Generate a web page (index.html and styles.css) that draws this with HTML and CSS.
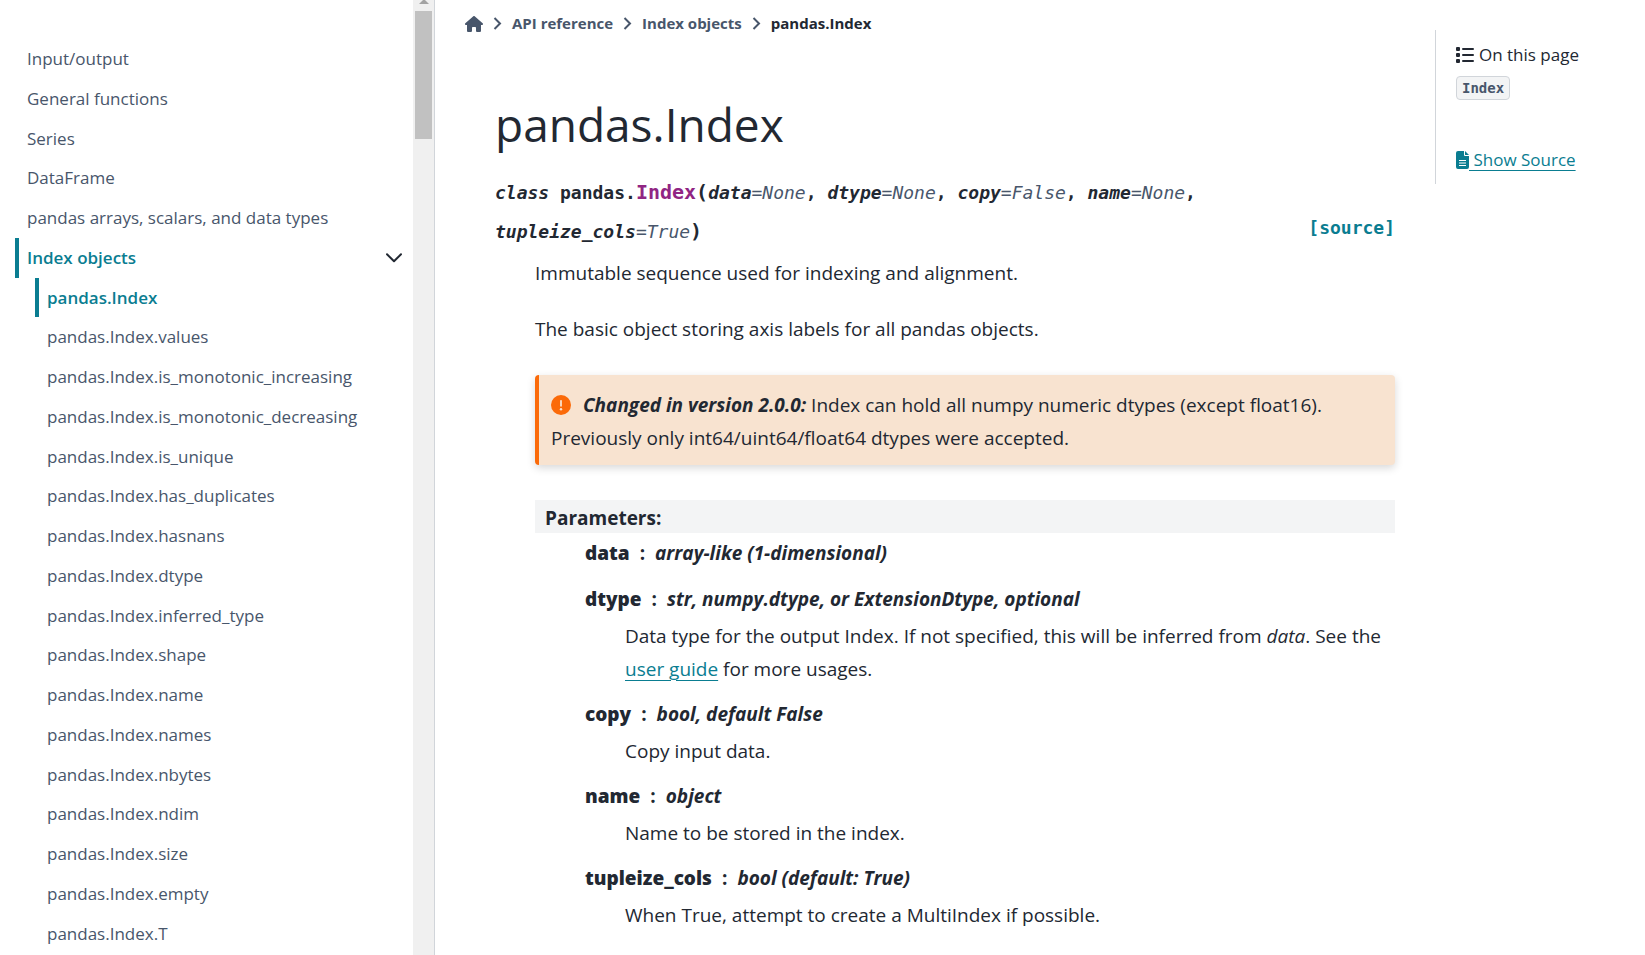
FILE: index.html
```html
<!DOCTYPE html>
<html lang="en">
<head>
<meta charset="utf-8">
<title>pandas.Index</title>
<link rel="stylesheet" href="styles.css">
</head>
<body>
<div class="page">
  <div class="sidebar">
    <nav class="sidebar-nav" aria-label="Section navigation">
      <ul class="nav-list">
        <li><a href="#">Input/output</a></li>
        <li><a href="#">General functions</a></li>
        <li><a href="#">Series</a></li>
        <li><a href="#">DataFrame</a></li>
        <li><a href="#">pandas arrays, scalars, and data types</a></li>
        <li>
          <div class="nav-row">
            <a class="current" href="#">Index objects</a>
            <button class="toggle" type="button" aria-label="Collapse Index objects">
              <svg width="16" height="10" viewBox="0 0 16 10" fill="none" stroke="currentColor" stroke-width="2" stroke-linecap="round" stroke-linejoin="round"><path d="M1 1.3l7 7 7-7"/></svg>
            </button>
          </div>
          <ul class="nav-list nested">
            <li><a class="current" href="#">pandas.Index</a></li>
            <li><a href="#">pandas.Index.values</a></li>
            <li><a href="#">pandas.Index.is_monotonic_increasing</a></li>
            <li><a href="#">pandas.Index.is_monotonic_decreasing</a></li>
            <li><a href="#">pandas.Index.is_unique</a></li>
            <li><a href="#">pandas.Index.has_duplicates</a></li>
            <li><a href="#">pandas.Index.hasnans</a></li>
            <li><a href="#">pandas.Index.dtype</a></li>
            <li><a href="#">pandas.Index.inferred_type</a></li>
            <li><a href="#">pandas.Index.shape</a></li>
            <li><a href="#">pandas.Index.name</a></li>
            <li><a href="#">pandas.Index.names</a></li>
            <li><a href="#">pandas.Index.nbytes</a></li>
            <li><a href="#">pandas.Index.ndim</a></li>
            <li><a href="#">pandas.Index.size</a></li>
            <li><a href="#">pandas.Index.empty</a></li>
            <li><a href="#">pandas.Index.T</a></li>
          </ul>
        </li>
      </ul>
    </nav>
    <div class="scrollbar" aria-hidden="true">
      <svg class="scroll-arrow" width="10" height="4" viewBox="0 0 10 4"><path d="M4 0h2l4 4H0z" fill="#a3a3a3"/></svg>
      <div class="scroll-thumb"></div>
    </div>
  </div>

  <main class="main">
    <nav class="breadcrumbs" aria-label="Breadcrumb">
      <a href="#" aria-label="Home"><svg class="home" width="18" height="16" viewBox="0 0 576 512" fill="currentColor"><path d="M575.8 255.500c0 18-15 32.100-32 32.100h-32l.7 160.200c0 2.700-.2 5.400-.5 8.100V472c0 22.100-17.900 40-40 40H392c-22.100 0-40-17.900-40-40v-88c0-17.700-14.300-32-32-32h-64c-17.700 0-32 14.300-32 32v88c0 22.100-17.900 40-40 40h-80c-22.100 0-40-17.900-40-40V287.600H32c-18 0-32-14-32-32.100 0-9 3-17 10-24L266.400 8c7-7 15-8 22-8s15 2 21 7l255.400 224.500c8 7 12 15 11 24z"/></svg></a>
      <svg class="sep" width="9" height="13" viewBox="0 0 9 13"><path d="M1.500 1l5.500 5.500L1.500 12"/></svg>
      <a href="#">API reference</a>
      <svg class="sep" width="9" height="13" viewBox="0 0 9 13"><path d="M1.500 1l5.500 5.500L1.500 12"/></svg>
      <a href="#">Index objects</a>
      <svg class="sep" width="9" height="13" viewBox="0 0 9 13"><path d="M1.500 1l5.500 5.500L1.500 12"/></svg>
      <span class="here">pandas.Index</span>
    </nav>

    <article class="article">
      <h1>pandas.Index</h1>
      <div class="signature">
        <code class="sig-text"><em>class</em> pandas.<span class="sig-name">Index</span><span class="paren">(</span><em>data</em><i>=None</i>, <em>dtype</em><i>=None</i>, <em>copy</em><i>=False</i>, <em>name</em><i>=None</i>, <em>tupleize_cols</em><i>=True</i><span class="paren">)</span></code>
        <a class="source" href="#">[source]</a>
      </div>
      <div class="description">
        <p>Immutable sequence used for indexing and alignment.</p>
        <p>The basic object storing axis labels for all pandas objects.</p>
        <div class="version-note">
          <svg class="note-icon" width="20" height="20" viewBox="0 0 20 20"><circle cx="10" cy="10" r="10" fill="#fb6a09"/><path d="M10 5.800v5" stroke="#f8e3d0" stroke-width="1.800" stroke-linecap="round"/><circle cx="10" cy="14.200" r="1.200" fill="#f8e3d0"/></svg><em>Changed in version 2.0.0:</em> Index can hold all numpy numeric dtypes (except float16). Previously only int64/uint64/float64 dtypes were accepted.
        </div>
        <h2 class="field-title">Parameters:</h2>
        <dl class="params">
          <dt><strong>data</strong><span class="colon">:</span><em>array-like (1-dimensional)</em></dt>
          <dt><strong>dtype</strong><span class="colon">:</span><em>str, numpy.dtype, or ExtensionDtype, optional</em></dt>
          <dd>Data type for the output Index. If not specified, this will be inferred from <i>data</i>. See the <a href="#">user guide</a> for more usages.</dd>
          <dt><strong>copy</strong><span class="colon">:</span><em>bool, default False</em></dt>
          <dd>Copy input data.</dd>
          <dt><strong>name</strong><span class="colon">:</span><em>object</em></dt>
          <dd>Name to be stored in the index.</dd>
          <dt><strong>tupleize_cols</strong><span class="colon">:</span><em>bool (default: True)</em></dt>
          <dd>When True, attempt to create a MultiIndex if possible.</dd>
        </dl>
      </div>
    </article>
  </main>

  <aside class="toc">
    <div class="toc-inner">
      <div class="toc-title">
        <svg width="18" height="16" viewBox="0 0 18 16" fill="currentColor"><rect x="0" y="0" width="4" height="4" rx="1"/><rect x="0" y="6" width="4" height="4" rx="1"/><rect x="0" y="12" width="4" height="4" rx="1"/><rect x="6" y="1" width="12" height="2" rx="1"/><rect x="6" y="7" width="12" height="2" rx="1"/><rect x="6" y="13" width="12" height="2" rx="1"/></svg>
        On this page
      </div>
      <a class="toc-link" href="#"><code>Index</code></a>
      <a class="show-source" href="#"><svg width="13" height="18" viewBox="0 0 13 18"><path d="M2 0h6v4a1 1 0 0 0 1 1h4v11a2 2 0 0 1-2 2H2a2 2 0 0 1-2-2V2a2 2 0 0 1 2-2z" fill="currentColor"/><path d="M9 0l4 4H9z" fill="currentColor"/><path d="M3 9.500h7M3 12h7M3 14.500h7" stroke="#fff"/></svg><span>&nbsp;Show Source</span></a>
    </div>
  </aside>
</div>
</body>
</html>
```
FILE: styles.css
```css
* {
  box-sizing: border-box;
}

body {
  margin: 0;
  background: #fff;
  color: #222832;
  font-family: "Open Sans", "Noto Sans", sans-serif;
  font-size: 19px;
  line-height: 33px;
}

a {
  color: #0a7d91;
}

.page {
  display: flex;
  height: 100vh;
  overflow: hidden;
}

/* Sidebar */
.sidebar {
  display: flex;
  flex: 0 0 435px;
  border-right: 1px solid #d1d5da;
  overflow: hidden;
}

.sidebar-nav {
  flex: 1;
  padding: 39px 0 0 15px;
  font-size: 17px;
  line-height: 1.75;
}

.nav-list {
  margin: 0;
  padding: 0;
  list-style: none;
}

.nested {
  padding-left: 20px;
}

.nav-list a {
  display: block;
  padding: 5px 0 5px 12px;
  color: #48566b;
  text-decoration: none;
}

.nav-list a.current {
  padding-left: 8px;
  border-left: 4px solid #0a7d91;
  color: #0a7d91;
  font-weight: 600;
}

.nav-row {
  display: flex;
  justify-content: space-between;
}

.toggle {
  display: flex;
  align-items: center;
  justify-content: center;
  width: 38px;
  padding: 0;
  border: 0;
  background: none;
  color: #222832;
}

.scrollbar {
  display: flex;
  flex-direction: column;
  align-items: center;
  gap: 7px;
  width: 21px;
  background: #f0f0f0;
}

.scroll-thumb {
  width: 17px;
  height: 128px;
  background: #c1c1c1;
}

/* Main column */
.main {
  flex: 1;
  min-width: 0;
  padding: 7px 40px 0 30px;
}

.breadcrumbs {
  display: flex;
  align-items: center;
  gap: 10px;
  font-size: 15px;
  font-weight: 700;
}

.breadcrumbs a {
  color: #48566b;
  text-decoration: none;
}

.home {
  display: block;
}

.sep {
  fill: none;
  stroke: #48566b;
  stroke-width: 2;
}

.article {
  padding: 49px 0 0 30px;
}

h1 {
  margin: 0 0 14px;
  font-size: 46px;
  font-weight: 400;
  line-height: 70px;
}

.signature {
  display: flex;
  align-items: flex-end;
  font-family: "DejaVu Sans Mono", monospace;
  font-size: 18px;
  font-weight: 700;
  line-height: 39px;
}

.sig-text {
  flex: 1;
  font-family: inherit;
}

.sig-text i {
  color: #48566b;
  font-weight: 400;
}

.sig-name,
.paren {
  font-size: 20px;
}

.sig-name {
  color: #912583;
}

.source {
  padding-bottom: 4px;
  text-decoration: none;
}

.description {
  padding: 6px 0 0 40px;
}

.description p {
  margin: 0 0 23px;
}

.version-note {
  margin: 29px 0 35px;
  padding: 14px 12px 10px;
  border-left: 4px solid #fb6a09;
  border-radius: 4px;
  background: #f8e3d0;
  box-shadow: 0 3px 8px #d8d8d8;
}

.version-note em {
  font-weight: 700;
}

.note-icon {
  margin-right: 12px;
  vertical-align: -3px;
}

.field-title {
  margin: 0;
  padding: 3px 10px 0;
  background: #f3f4f5;
  font-size: 19px;
  font-weight: 700;
  line-height: 30px;
}

.params {
  margin: 4px 0 0 50px;
}

.params dt {
  margin-bottom: 4px;
  font-weight: 700;
}

.params dt + dt {
  margin-top: 13px;
}

.params strong {
  font-weight: 800;
}

.colon {
  margin: 0 10px;
}

.params dd {
  margin: 0 0 12px 40px;
}

.params a,
.show-source span {
  text-decoration: underline;
  text-decoration-thickness: 1px;
  text-underline-offset: 4px;
}

/* Right column */
.toc {
  flex: 0 0 210px;
  padding-top: 30px;
}

.toc-inner {
  display: flex;
  flex-direction: column;
  align-items: flex-start;
  padding: 8px 0 8px 20px;
  border-left: 1px solid #d1d5da;
  font-size: 17px;
}

.toc-title {
  display: flex;
  align-items: center;
  gap: 5px;
}

.toc-link {
  display: flex;
  margin: 5px 0 43px;
  text-decoration: none;
}

.toc-link code {
  padding: 0 5px;
  border: 1px solid #d1d5da;
  border-radius: 4px;
  background: #f3f4f5;
  color: #48566b;
  font-family: "DejaVu Sans Mono", monospace;
  font-size: 14px;
  font-weight: 700;
  line-height: 22px;
}

.show-source {
  display: flex;
  align-items: center;
  text-decoration: none;
}
```
